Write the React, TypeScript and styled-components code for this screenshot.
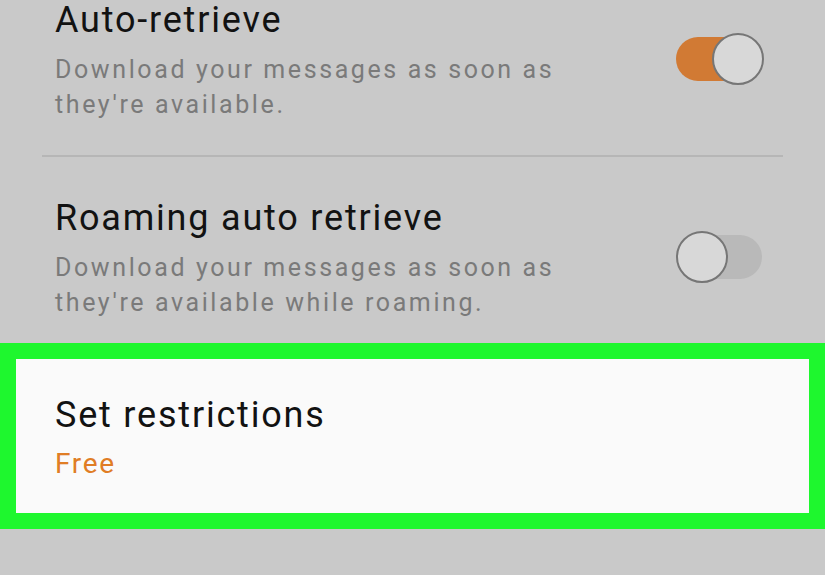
import styled, { createGlobalStyle } from "styled-components";

const GlobalStyle = createGlobalStyle`
  html, body {
    margin: 0;
    padding: 0;
    background: #c9c9c9;
  }
  body {
    font-family: Roboto, "Noto Sans", "Liberation Sans", sans-serif;
  }
`;

const Screen = styled.div`
  width: 825px;
  height: 575px;
  overflow: hidden;
  background: #c9c9c9;
  display: flex;
  flex-direction: column;
`;

// 설정 한 줄 (제목 + 설명 + 스위치)
const Row = styled.div<{ top?: number }>`
  display: flex;
  align-items: center;
  padding: ${({ top }) => top ?? 0}px 63px 0 55px;
`;

const TextBlock = styled.div`
  flex: 1;
  display: flex;
  flex-direction: column;
`;

const Title = styled.div`
  font-size: 36px;
  line-height: 40px;
  letter-spacing: 1.8px;
  color: #121212;
`;

const Desc = styled.div`
  margin-top: 12px;
  font-size: 25px;
  line-height: 35px;
  letter-spacing: 2.6px;
  color: #7a7a7a;
`;

const Divider = styled.div`
  height: 2px;
  margin: 33px 42px 0;
  background: #b6b6b6;
`;

const Track = styled.div<{ on?: boolean }>`
  position: relative;
  width: 86px;
  height: 44px;
  margin-bottom: 4px;
  border-radius: 22px;
  background: ${({ on }) => (on ? "#d17a34" : "#b9b9b9")};
`;

const Knob = styled.div<{ on?: boolean }>`
  position: absolute;
  top: -4px;
  left: ${({ on }) => (on ? "36px" : "0px")};
  width: 48px;
  height: 48px;
  border-radius: 50%;
  background: #d8d8d8;
  border: 2px solid #767676;
`;

const Highlight = styled.div`
  margin-top: 23px;
  border: 16px solid #1ef72e;
  background: #fafafa;
  padding: 36px 40px 31px 39px;
`;

const Value = styled.div`
  margin-top: 11px;
  font-size: 28px;
  line-height: 36px;
  letter-spacing: 1.7px;
  color: #e07d25;
`;

function Toggle({ on }: { on?: boolean }) {
  return (
    <Track on={on}>
      <Knob on={on} />
    </Track>
  );
}

const App = () => {
  return (
    <Screen>
      <GlobalStyle />
      <Row>
        <TextBlock>
          <Title>Auto-retrieve</Title>
          <Desc>
            Download your messages as soon as
            <br />
            they're available.
          </Desc>
        </TextBlock>
        <Toggle on />
      </Row>
      <Divider />
      <Row top={41}>
        <TextBlock>
          <Title>Roaming auto retrieve</Title>
          <Desc>
            Download your messages as soon as
            <br />
            they're available while roaming.
          </Desc>
        </TextBlock>
        <Toggle />
      </Row>
      <Highlight>
        <Title>Set restrictions</Title>
        <Value>Free</Value>
      </Highlight>
    </Screen>
  );
};

export default App;
